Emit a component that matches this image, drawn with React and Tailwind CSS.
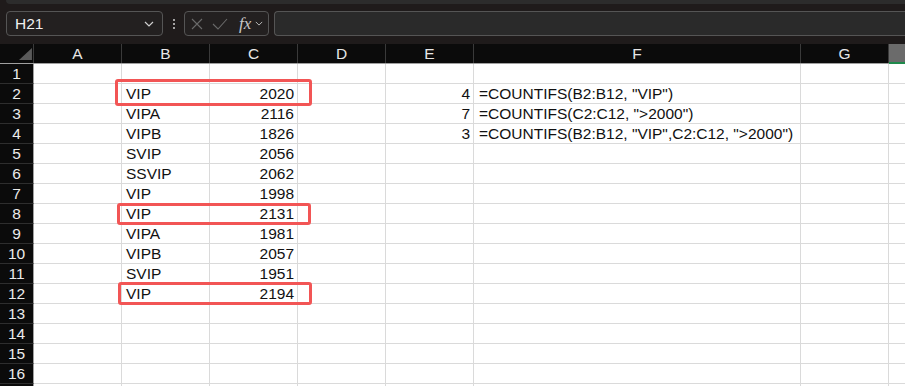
import React from 'react';

const cols = [
  { key: 'A', w: 'w-[88px]' },
  { key: 'B', w: 'w-[88px]' },
  { key: 'C', w: 'w-[88px]' },
  { key: 'D', w: 'w-[88px]' },
  { key: 'E', w: 'w-[88px]' },
  { key: 'F', w: 'w-[327px]' },
  { key: 'G', w: 'w-[88px]' },
];

const data = {
  2: { B: 'VIP', C: '2020', E: '4', F: '=COUNTIFS(B2:B12, "VIP")' },
  3: { B: 'VIPA', C: '2116', E: '7', F: '=COUNTIFS(C2:C12, ">2000")' },
  4: { B: 'VIPB', C: '1826', E: '3', F: '=COUNTIFS(B2:B12, "VIP",C2:C12, ">2000")' },
  5: { B: 'SVIP', C: '2056' },
  6: { B: 'SSVIP', C: '2062' },
  7: { B: 'VIP', C: '1998' },
  8: { B: 'VIP', C: '2131' },
  9: { B: 'VIPA', C: '1981' },
  10: { B: 'VIPB', C: '2057' },
  11: { B: 'SVIP', C: '1951' },
  12: { B: 'VIP', C: '2194' },
};

const rows = Array.from({ length: 17 }, (_, i) => i + 1);

function Chevron({ className }) {
  return (
    <svg viewBox="0 0 10 6" className={className} fill="none" stroke="currentColor" strokeWidth="1.2">
      <path d="M1 1l4 4 4-4" />
    </svg>
  );
}

function Toolbar() {
  return (
    <div className="h-[44px] bg-[#1f1b1b] relative">
      <div className="ml-[6px] h-[4px] bg-[#2c2c2c] rounded-bl-[5px]" />
      <div className="flex items-center pt-[7px] pl-[6px] gap-0">
        <div className="w-[157px] h-[25px] border border-[#555] rounded-[4px] bg-[#232020] flex items-center justify-between pl-[8px] pr-[8px]">
          <span className="text-[15.5px] text-[#f0f0f0] leading-none">H21</span>
          <Chevron className="w-[10px] h-[6px] text-[#cfcfcf]" />
        </div>
        <div className="w-[21px] flex flex-col items-center gap-[2px]">
          <span className="w-[2px] h-[2px] bg-[#d0d0d0] rounded-full" />
          <span className="w-[2px] h-[2px] bg-[#d0d0d0] rounded-full" />
          <span className="w-[2px] h-[2px] bg-[#d0d0d0] rounded-full" />
        </div>
        <div className="w-[85px] h-[25px] border border-[#555] rounded-[4px] bg-[#232020] flex items-center pl-[6px]">
          <svg viewBox="0 0 12 12" className="w-[12px] h-[12px] text-[#6a6a6a]" fill="none" stroke="currentColor" strokeWidth="1.1">
            <path d="M1 1l10 10M11 1L1 11" />
          </svg>
          <svg viewBox="0 0 16 12" className="w-[16px] h-[12px] ml-[9px] text-[#6a6a6a]" fill="none" stroke="currentColor" strokeWidth="1.1">
            <path d="M1 6l5 5L15 1" />
          </svg>
          <span className="ml-[11px] text-[17px] italic text-[#c8c8c8] leading-none font-['Liberation_Serif',serif]">fx</span>
          <Chevron className="ml-[4px] w-[8px] h-[5px] text-[#bdbdbd]" />
        </div>
        <div className="ml-[5px] flex-1 h-[25px] border border-[#555] rounded-l-[4px] border-r-0 bg-[#2a2a2a]" />
      </div>
    </div>
  );
}

function Header() {
  return (
    <div className="flex h-[20px] bg-[#0b0b0b] border-b border-[#a0a0a0]">
      <div className="w-[34px] shrink-0 border-r border-[#3a3a3a] relative">
        <svg viewBox="0 0 14 13" className="absolute left-[19px] top-[4px] w-[13px] h-[12px]">
          <path d="M14 0L14 13L0 13Z" fill="#5a5a5a" />
        </svg>
      </div>
      {cols.map((c) => (
        <div
          key={c.key}
          className={`${c.w} shrink-0 border-r border-[#3a3a3a] text-[#e6e6e6] text-[15.5px] flex items-center justify-center`}
        >
          {c.key}
        </div>
      ))}
      <div className="flex-1 bg-[#6b6b6b] border-b-2 border-[#1f8a4c] -mb-[1px]" />
    </div>
  );
}

function Row({ n }) {
  const d = data[n] || {};
  return (
    <div className="flex h-[20px]">
      <div className="w-[34px] shrink-0 bg-[#0b0b0b] border-r border-[#a0a0a0] border-b border-b-[#2e2e2e] text-[#ececec] text-[15.5px] flex items-center justify-center">
        {n <= 16 ? n : ''}
      </div>
      {cols.map((c) => {
        const v = d[c.key];
        const right = c.key === 'C' || c.key === 'E';
        return (
          <div
            key={c.key}
            className={`${c.w} shrink-0 bg-white border-r border-b border-[#dadada] text-[15.5px] text-[#111] flex items-center whitespace-nowrap ${
              right ? 'justify-end pr-[3px]' : c.key === 'F' ? 'pl-[5px]' : 'pl-[4px]'
            }`}
          >
            {v}
          </div>
        );
      })}
      <div className="flex-1 bg-white border-b border-[#dadada]" />
    </div>
  );
}

export default function App() {
  return (
    <div className="relative w-[905px] h-[386px] overflow-hidden bg-white font-['Liberation_Sans',Arial,sans-serif]">
      <Toolbar />
      <Header />
      {rows.map((n) => (
        <Row key={n} n={n} />
      ))}
      <div className="absolute left-[115px] top-[79px] w-[197px] h-[27px] border-[3px] border-[#f25555] rounded-[3px]" />
      <div className="absolute left-[117px] top-[203px] w-[194px] h-[22px] border-[3px] border-[#f25555] rounded-[3px]" />
      <div className="absolute left-[118px] top-[282px] w-[194px] h-[23px] border-[3px] border-[#f25555] rounded-[3px]" />
    </div>
  );
}
